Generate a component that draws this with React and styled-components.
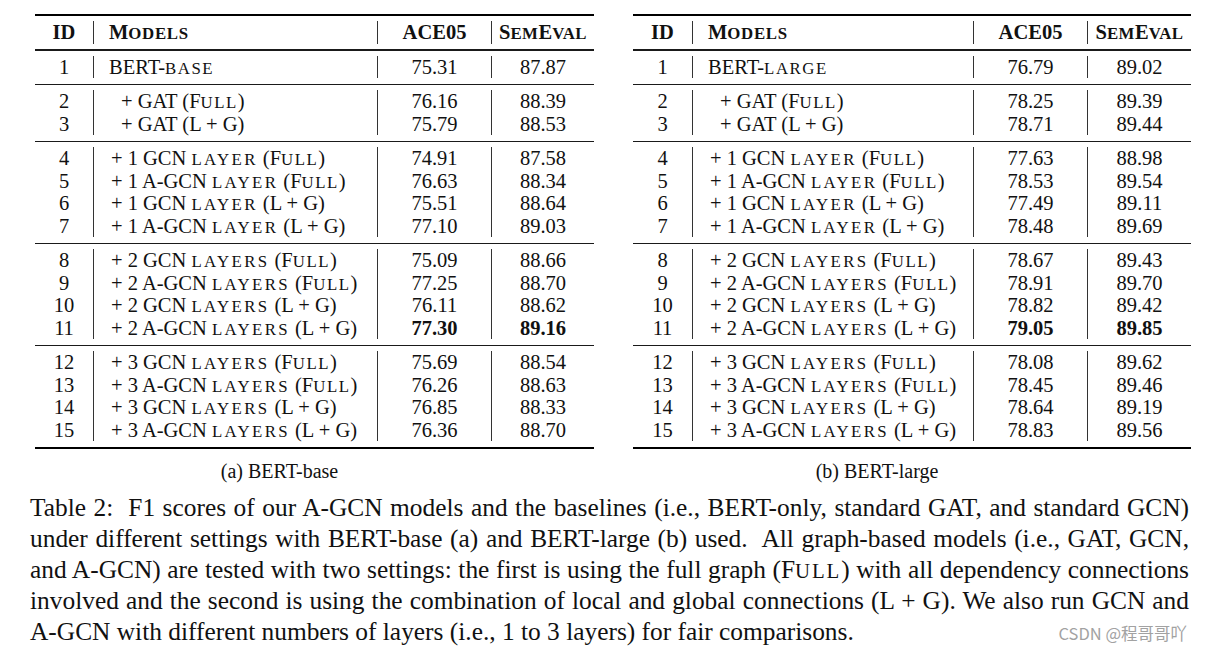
import React from 'react';
import styled, { createGlobalStyle } from 'styled-components';

const GlobalStyle = createGlobalStyle`
  html, body {
    margin: 0;
    padding: 0;
    background: #fff;
  }
  body {
    font-family: "Liberation Serif", "Times New Roman", serif;
    color: #111;
  }
`;

const Page = styled.div`
  width: 1207px;
  height: 648px;
  padding: 14px 0 0 30px;
  box-sizing: border-box;
  overflow: hidden;
`;

const Tables = styled.div`
  display: flex;
  gap: 39px;
  padding-left: 5px;
`;

const Figure = styled.div`
  display: flex;
  flex-direction: column;
  width: ${p => p.width}px;
`;

const Rule = styled.div`
  height: ${p => p.thick}px;
  background: ${p => (p.thick > 1.5 ? '#000' : '#1a1a1a')};
`;

const Group = styled.div`
  padding: 5px 0 5.5px;
`;

const Row = styled.div`
  display: grid;
  grid-template-columns: ${p => p.cols};
  font-size: 20.5px;
  line-height: 22.5px;
`;

const Cell = styled.div`
  text-align: ${p => p.align || 'center'};
  padding-left: ${p => (p.align === 'left' ? 15 + (p.indent || 0) : 0)}px;
  border-left: ${p => (p.sep ? '1px solid #333' : 'none')};
  font-weight: ${p => (p.bold ? 700 : 400)};
  white-space: nowrap;
`;

// lowercase letters drawn as smaller capitals, like LaTeX \textsc
const Small = styled.span`
  text-transform: uppercase;
  font-size: 0.82em;
  line-height: 1;
  letter-spacing: ${p => p.spacing}em;
`;

const Sc = ({ children, spacing = 0.09 }) => {
  const parts = String(children).split(/([a-z]+)/);
  return (
    <>
      {parts.map((part, i) =>
        /^[a-z]+$/.test(part) ? <Small key={i} spacing={spacing}>{part}</Small> : part
      )}
    </>
  );
};

const SubCaption = styled.div`
  margin-top: 11px;
  font-size: 20px;
  line-height: 22px;
  text-align: center;
  padding-right: 70px;
`;

const Caption = styled.div`
  margin-top: 10px;
  width: 1159px;
  font-size: 25.4px;
  line-height: 31px;
`;

const Line = styled.div`
  text-align: justify;
  text-align-last: justify;
  white-space: nowrap;
`;

const LastLine = styled.div`
  display: flex;
  justify-content: space-between;
  align-items: baseline;
`;

const Watermark = styled.span`
  font-family: "Noto Sans CJK SC", "Noto Sans", sans-serif;
  font-size: 16.5px;
  color: #a2a2a2;
  margin-right: 2px;
`;

const leftGroups = [
  [{ id: 1, model: 'base', a: '75.31', b: '87.87' }],
  [
    { id: 2, model: 'gat-full', a: '76.16', b: '88.39' },
    { id: 3, model: 'gat-lg', a: '75.79', b: '88.53' },
  ],
  [
    { id: 4, model: '1 GCN|layer|Full', a: '74.91', b: '87.58' },
    { id: 5, model: '1 A-GCN|layer|Full', a: '76.63', b: '88.34' },
    { id: 6, model: '1 GCN|layer|LG', a: '75.51', b: '88.64' },
    { id: 7, model: '1 A-GCN|layer|LG', a: '77.10', b: '89.03' },
  ],
  [
    { id: 8, model: '2 GCN|layers|Full', a: '75.09', b: '88.66' },
    { id: 9, model: '2 A-GCN|layers|Full', a: '77.25', b: '88.70' },
    { id: 10, model: '2 GCN|layers|LG', a: '76.11', b: '88.62' },
    { id: 11, model: '2 A-GCN|layers|LG', a: '77.30', b: '89.16', best: true },
  ],
  [
    { id: 12, model: '3 GCN|layers|Full', a: '75.69', b: '88.54' },
    { id: 13, model: '3 A-GCN|layers|Full', a: '76.26', b: '88.63' },
    { id: 14, model: '3 GCN|layers|LG', a: '76.85', b: '88.33' },
    { id: 15, model: '3 A-GCN|layers|LG', a: '76.36', b: '88.70' },
  ],
];

const leftScores = leftGroups.map(g => g.map(r => [r.a, r.b]));

const rightScores = [
  [['76.79', '89.02']],
  [['78.25', '89.39'], ['78.71', '89.44']],
  [['77.63', '88.98'], ['78.53', '89.54'], ['77.49', '89.11'], ['78.48', '89.69']],
  [['78.67', '89.43'], ['78.91', '89.70'], ['78.82', '89.42'], ['79.05', '89.85']],
  [['78.08', '89.62'], ['78.45', '89.46'], ['78.64', '89.19'], ['78.83', '89.56']],
];

const Setting = ({ kind }) =>
  kind === 'Full' ? <>(<Sc>Full</Sc>)</> : <>(L + G)</>;

const ModelName = ({ model, variant }) => {
  if (model === 'base') return <>BERT-<Sc>{variant}</Sc></>;
  if (model === 'gat-full') return <>+ GAT <Setting kind="Full" /></>;
  if (model === 'gat-lg') return <>+ GAT <Setting kind="LG" /></>;
  const [name, word, kind] = model.split('|');
  return <>+ {name} <Sc spacing={0.14}>{word}</Sc> <Setting kind={kind} /></>;
};

const ResultTable = ({ cols, width, variant, scores, label }) => (
  <Figure width={width}>
    <Rule thick={2} />
    <Group>
      <Row cols={cols}>
        <Cell bold>ID</Cell>
        <Cell bold sep align="left"><Sc spacing={0.04}>Models</Sc></Cell>
        <Cell bold sep>ACE05</Cell>
        <Cell bold sep><Sc spacing={0.03}>SemEval</Sc></Cell>
      </Row>
    </Group>
    {leftGroups.map((group, gi) => (
      <React.Fragment key={gi}>
        <Rule thick={1.5} />
        <Group>
          {group.map((row, ri) => {
            const [a, b] = scores[gi][ri];
            const gat = row.model.startsWith('gat');
            return (
              <Row cols={cols} key={row.id}>
                <Cell>{row.id}</Cell>
                <Cell sep align="left" indent={gat ? 12 : row.model === 'base' ? 0 : 2}>
                  <ModelName model={row.model} variant={variant} />
                </Cell>
                <Cell sep bold={row.best}>{a}</Cell>
                <Cell sep bold={row.best}>{b}</Cell>
              </Row>
            );
          })}
        </Group>
      </React.Fragment>
    ))}
    <Rule thick={2} />
    <SubCaption>{label}</SubCaption>
  </Figure>
);

export default function App() {
  return (
    <Page>
      <GlobalStyle />
      <Tables>
        <ResultTable
          cols="58px 284px 114px 103px"
          width={559}
          variant="base"
          scores={leftScores}
          label="(a) BERT-base"
        />
        <ResultTable
          cols="59px 281px 114px 104px"
          width={558}
          variant="large"
          scores={rightScores}
          label="(b) BERT-large"
        />
      </Tables>
      <Caption>
        <Line>Table 2:&nbsp; F1 scores of our A-GCN models and the baselines (i.e., BERT-only, standard GAT, and standard GCN)</Line>
        <Line>under different settings with BERT-base (a) and BERT-large (b) used.&nbsp; All graph-based models (i.e., GAT, GCN,</Line>
        <Line>and A-GCN) are tested with two settings: the first is using the full graph (<Sc>Full</Sc>) with all dependency connections</Line>
        <Line>involved and the second is using the combination of local and global connections (L + G). We also run GCN and</Line>
        <LastLine>
          <span>A-GCN with different numbers of layers (i.e., 1 to 3 layers) for fair comparisons.</span>
          <Watermark>CSDN @程哥哥吖</Watermark>
        </LastLine>
      </Caption>
    </Page>
  );
}
